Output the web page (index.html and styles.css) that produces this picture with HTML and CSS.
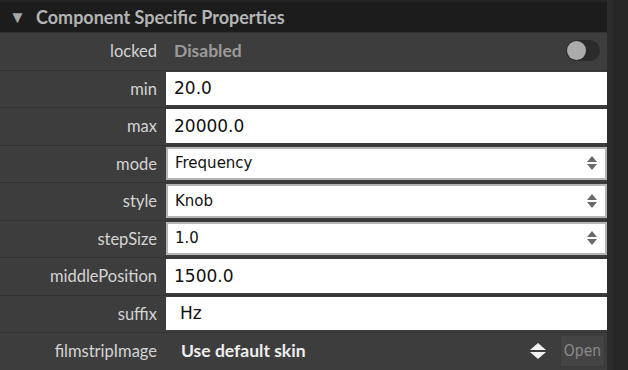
FILE: index.html
```html
<!DOCTYPE html>
<html lang="en">
<head>
    <meta charset="UTF-8">
    <title>Component Specific Properties</title>
    <link rel="stylesheet" href="styles.css">
</head>
<body>
    <div id="panel">
        <div id="properties">
            <div class="section-header">
                <span class="arrow">&#9660;</span>
                <span class="section-title">Component Specific Properties</span>
            </div>
            <div class="prop-row">
                <div class="prop-label">locked</div>
                <div class="prop-value toggle-value">
                    <span class="state-text">Disabled</span>
                    <span class="toggle"><span class="knob"></span></span>
                </div>
            </div>
            <div class="prop-row">
                <div class="prop-label">min</div>
                <div class="prop-value"><div class="text-field">20.0</div></div>
            </div>
            <div class="prop-row">
                <div class="prop-label">max</div>
                <div class="prop-value"><div class="text-field">20000.0</div></div>
            </div>
            <div class="prop-row">
                <div class="prop-label">mode</div>
                <div class="prop-value">
                    <div class="select-field"><span>Frequency</span><span class="spinner"><i class="up"></i><i class="down"></i></span></div>
                </div>
            </div>
            <div class="prop-row">
                <div class="prop-label">style</div>
                <div class="prop-value">
                    <div class="select-field"><span>Knob</span><span class="spinner"><i class="up"></i><i class="down"></i></span></div>
                </div>
            </div>
            <div class="prop-row">
                <div class="prop-label">stepSize</div>
                <div class="prop-value">
                    <div class="select-field"><span>1.0</span><span class="spinner"><i class="up"></i><i class="down"></i></span></div>
                </div>
            </div>
            <div class="prop-row">
                <div class="prop-label">middlePosition</div>
                <div class="prop-value"><div class="text-field">1500.0</div></div>
            </div>
            <div class="prop-row">
                <div class="prop-label">suffix</div>
                <div class="prop-value"><div class="text-field suffix-field">Hz</div></div>
            </div>
            <div class="prop-row">
                <div class="prop-label">filmstripImage</div>
                <div class="prop-value image-value">
                    <span class="skin-text">Use default skin</span>
                    <span class="spinner light"><i class="up"></i><i class="down"></i></span>
                    <button class="open-button">Open</button>
                </div>
            </div>
        </div>
        <div id="scrollbar"></div>
    </div>
</body>
</html>
```

FILE: styles.css
```css
body {
    margin: 0;
    background: #262626;
    font-family: Lato, "Open Sans", sans-serif;
    overflow: hidden;
}
#panel {
    display: flex;
    width: 628px;
    height: 370px;
    overflow: hidden;
}
#properties {
    width: 607px;
    display: flex;
    flex-direction: column;
    background: #2f2f2f;
}
#scrollbar {
    flex: 1;
    background: #272727;
    border-left: 6px solid #2c2c2c;
}
.section-header {
    height: 30px;
    flex: none;
    display: flex;
    align-items: center;
    background: #1c1c1c;
    border-top: 2px solid #252525;
    color: #b4b4b4;
    font-size: 18px;
    font-weight: bold;
}
.arrow {
    font-size: 17px;
    color: #a8a8a8;
    width: 36px;
    padding-left: 9px;
    box-sizing: border-box;
}
.prop-row {
    height: 36.5px;
    flex: none;
    display: flex;
    background: #3d3d3d;
    border-top: 1px solid #333;
}
.prop-label {
    width: 166px;
    flex: none;
    box-sizing: border-box;
    padding-right: 9px;
    text-align: right;
    line-height: 36px;
    color: #d4d4d4;
    font-size: 16.5px;
}
.prop-value {
    flex: 1;
    display: flex;
    align-items: center;
    padding: 1px 0 2px;
    box-sizing: border-box;
}
.text-field {
    width: 100%;
    height: 100%;
    background: #fff;
    display: flex;
    align-items: center;
    padding-left: 8px;
    box-sizing: border-box;
    font-family: "DejaVu Sans", sans-serif;
    font-size: 17px;
    color: #111;
}
.suffix-field {
    padding-left: 14px;
}
.select-field {
    width: 100%;
    height: 100%;
    background: #fff;
    border: 2px solid #b5b5b5;
    box-sizing: border-box;
    display: flex;
    align-items: center;
    justify-content: space-between;
    padding: 0 8px 0 7px;
    font-family: "DejaVu Sans", sans-serif;
    font-size: 15px;
    color: #111;
}
.spinner {
    display: flex;
    flex-direction: column;
    gap: 2px;
}
.spinner i {
    width: 0;
    height: 0;
    border-left: 5px solid transparent;
    border-right: 5px solid transparent;
}
.spinner .up {
    border-bottom: 6px solid #6a6a6a;
}
.spinner .down {
    border-top: 6px solid #6a6a6a;
}
.toggle-value {
    justify-content: space-between;
    padding-left: 8px;
    padding-right: 7px;
}
.state-text {
    color: #9a9a9a;
    font-size: 17.5px;
    font-weight: bold;
}
.toggle {
    width: 34px;
    height: 21px;
    border-radius: 11px;
    background: #2b2b2b;
    display: flex;
    align-items: center;
    padding-left: 1px;
    box-sizing: border-box;
}
.knob {
    width: 19px;
    height: 19px;
    border-radius: 50%;
    background: #ababab;
}
.image-value {
    padding-left: 15px;
    padding-right: 2px;
}
.skin-text {
    flex: 1;
    color: #eee;
    font-size: 17.5px;
    font-weight: bold;
}
.spinner.light {
    margin-right: 14px;
}
.spinner.light .up {
    border-left-width: 8px;
    border-right-width: 8px;
    border-bottom: 7px solid #f2f2f2;
}
.spinner.light .down {
    border-left-width: 8px;
    border-right-width: 8px;
    border-top: 7px solid #f2f2f2;
}
.open-button {
    height: 32px;
    width: 45px;
    background: #444;
    border: 1px solid #3a3a3a;
    color: #8a8a8a;
    font-family: "DejaVu Sans Condensed", "DejaVu Sans", sans-serif;
    font-size: 15.5px;
    padding: 0;
}
```
